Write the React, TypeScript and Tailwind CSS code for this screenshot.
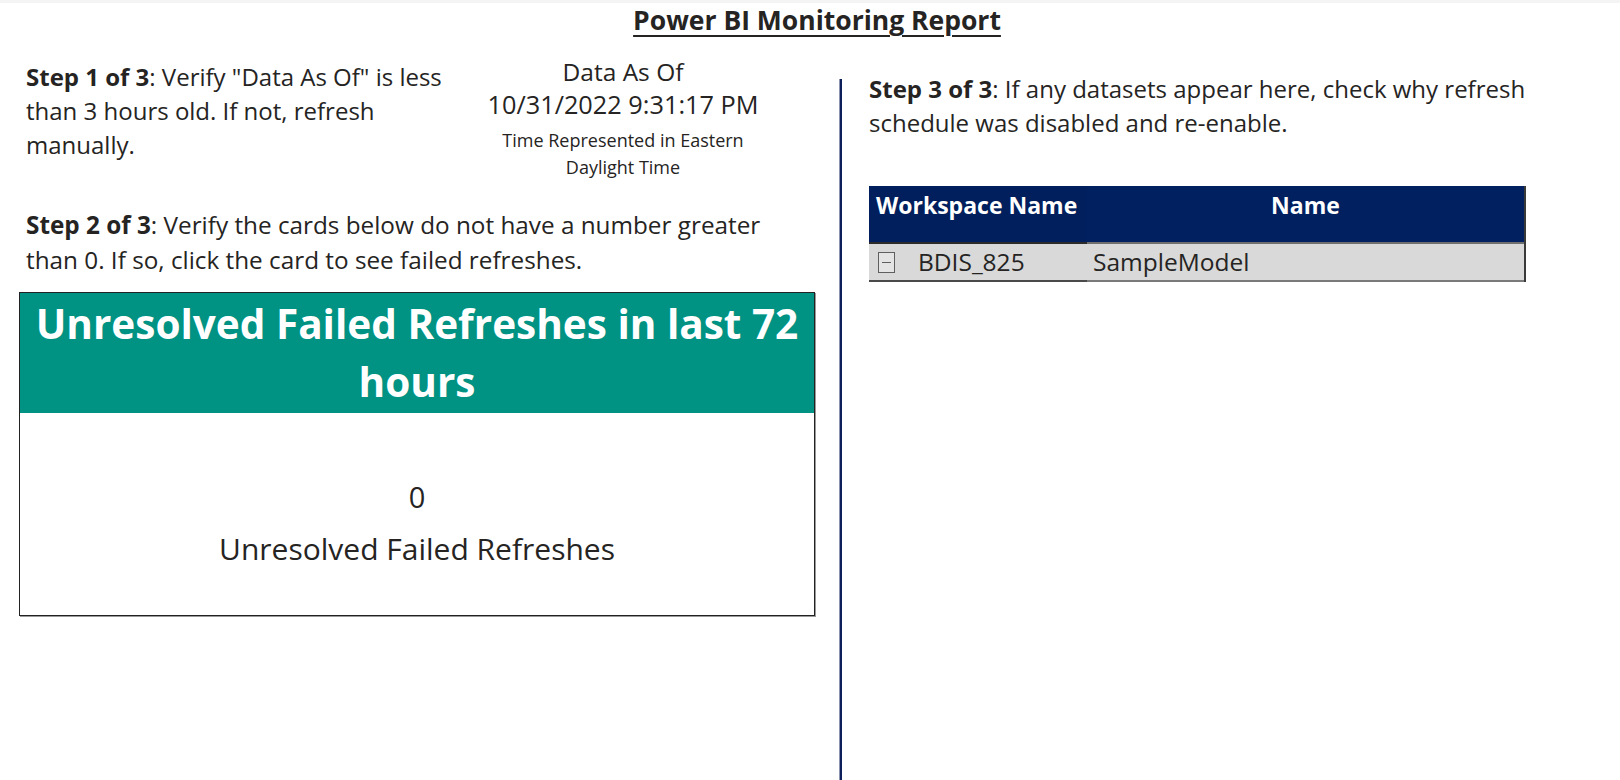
import React from "react";

const font = { fontFamily: '"Segoe UI", "Open Sans", "Noto Sans", sans-serif' };

function ExpandIcon() {
  return (
    <span className="inline-flex h-[21px] w-[17px] shrink-0 items-center justify-center border border-[#5f5f5f] bg-[#e4e4e4]">
      <span className="block h-[1px] w-[9px] bg-[#5f5f5f]" />
    </span>
  );
}

export default function App() {
  return (
    <div
      className="relative h-[780px] w-[1620px] overflow-hidden bg-white text-[#252423]"
      style={font}
    >
      <div className="h-[3px] bg-[#f4f4f4]" />
      <header className="flex h-[39px] items-center justify-center pb-[4px] pl-[14px]">
        <h1 className="text-[26.5px] font-bold leading-none underline decoration-2 underline-offset-[5px]">
          Power BI Monitoring Report
        </h1>
      </header>

      <div className="flex h-[738px]">
        {/* Left column */}
        <div className="w-[840px] shrink-0">
          <div className="flex items-start pt-[13px]">
            <p className="ml-[26px] mt-[5px] w-[430px] text-[24px] leading-[34px]">
              <span className="font-bold">Step 1 of 3</span>: Verify "Data As Of" is less than 3 hours old. If not, refresh manually.
            </p>
            <div className="ml-[17px] w-[300px] text-center">
              <div className="text-[24.5px] leading-[33px]">Data As Of</div>
              <div className="text-[25.3px] leading-[33px]">10/31/2022 9:31:17 PM</div>
              <div className="mt-[6px] text-[18px] leading-[27px]">
                Time Represented in Eastern
                <br />
                Daylight Time
              </div>
            </div>
          </div>

          <p className="ml-[26px] mt-[26px] w-[760px] text-[24.3px] leading-[35px]">
            <span className="font-bold">Step 2 of 3</span>: Verify the cards below do not have a number greater than 0. If so, click the card to see failed refreshes.
          </p>

          <div className="ml-[19px] mt-[15px] flex h-[324px] w-[796px] flex-col border border-[#222] shadow-[1px_1px_0_#9a9a9a]">
            <div className="flex h-[120px] items-center justify-center bg-[#009283] text-center">
              <div className="text-[40.5px] font-bold leading-[58px] text-white">
                Unresolved Failed Refreshes in last 72 hours
              </div>
            </div>
            <div className="flex flex-1 flex-col items-center pt-[67px]">
              <div className="text-[29px] leading-[34px]">0</div>
              <div className="mt-[17px] text-[30px] leading-[36px]">Unresolved Failed Refreshes</div>
            </div>
          </div>
        </div>

        {/* Divider */}
        <div className="mt-[37px] w-[2px] shrink-0 bg-[#0c1f5a] shadow-[-1px_0_0_#8a93b0]" />

        {/* Right column */}
        <div className="flex-1 pl-[27px]">
          <p className="mt-[30px] w-[680px] text-[24px] leading-[34px]">
            <span className="font-bold">Step 3 of 3</span>: If any datasets appear here, check why refresh schedule was disabled and re-enable.
          </p>

          <div className="mt-[46px] w-[657px] border-r-2 border-[#3a3a3a]">
            <div className="flex h-[58px] bg-[#002060] text-white">
              <div className="w-[218px] border-b-2 border-[#2b2b2b] bg-[#001f5c] pl-[7px] pt-[3px] text-[23px] font-bold leading-[32px]">
                Workspace Name
              </div>
              <div className="flex-1 border-b-2 border-[#6f6f6f] pt-[3px] text-center text-[23px] font-bold leading-[32px]">
                Name
              </div>
            </div>
            <div className="flex h-[38px] bg-[#d9d9d9] text-[24.5px]">
              <div className="flex w-[218px] items-center border-b-2 border-[#4a4a4a] pl-[9px]">
                <ExpandIcon />
                <span className="ml-[23px]">BDIS_825</span>
              </div>
              <div className="flex flex-1 items-center border-b-2 border-[#7a7a7a] pl-[6px]">SampleModel</div>
            </div>
          </div>
        </div>
      </div>
    </div>
  );
}
